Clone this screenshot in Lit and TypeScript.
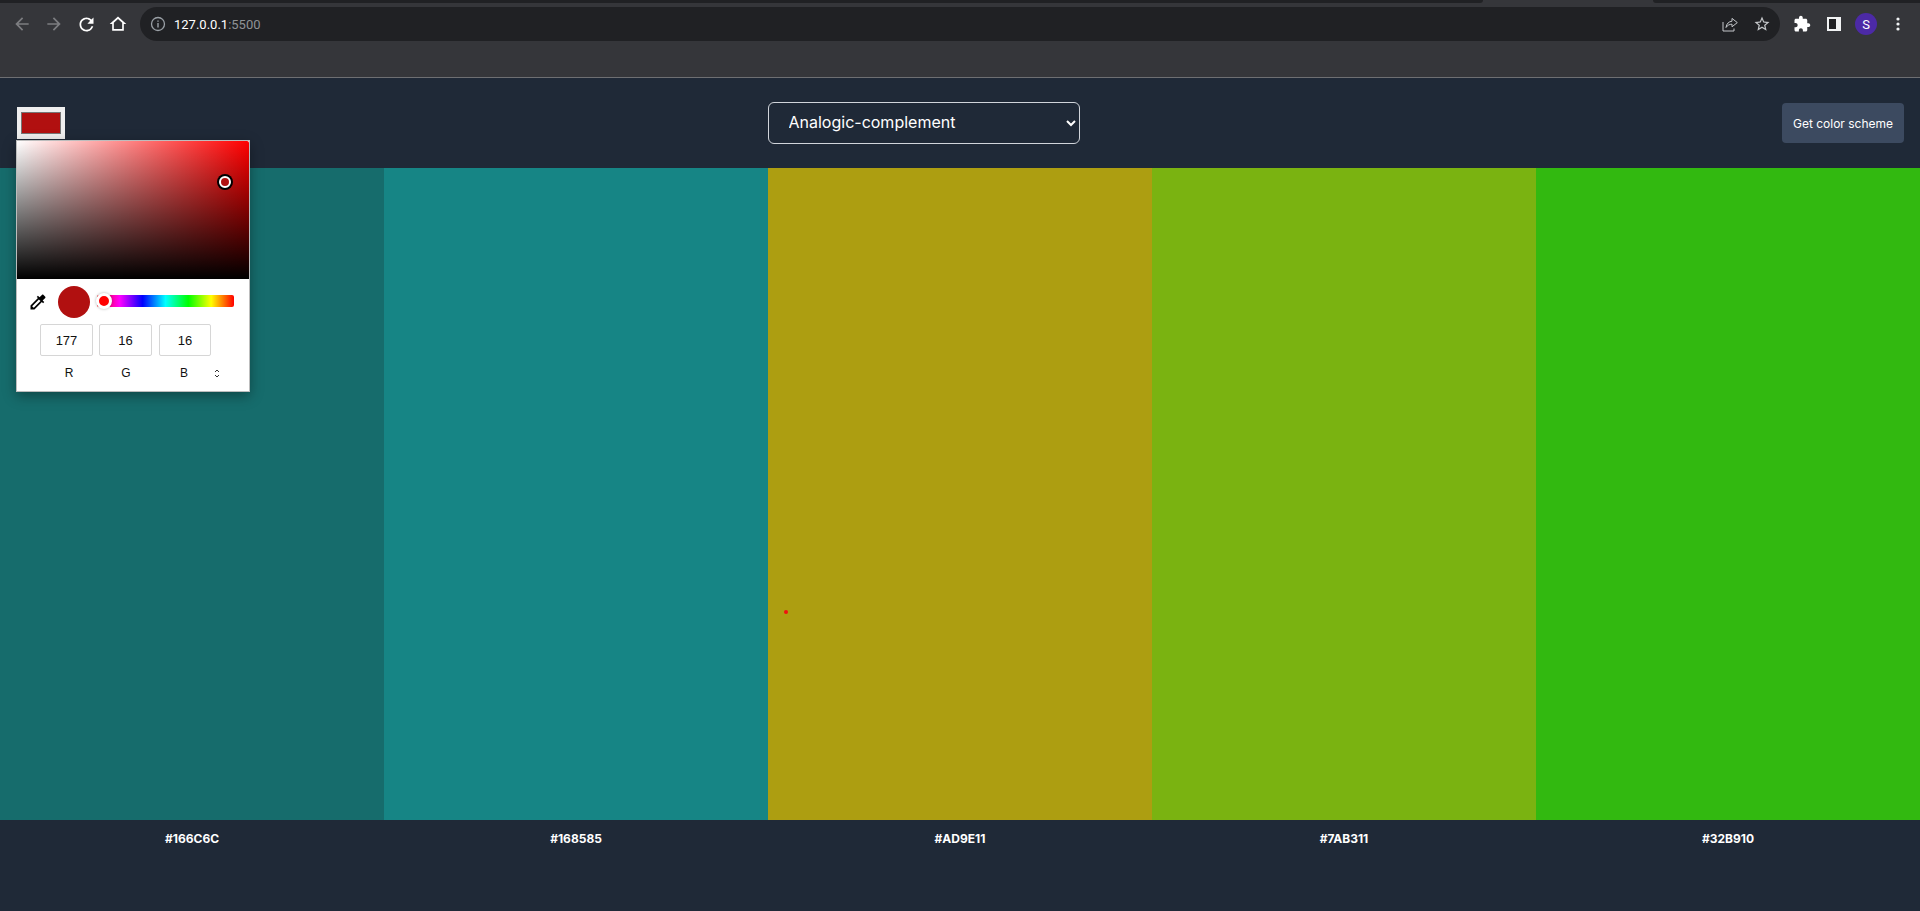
import { LitElement, css, html, svg } from 'lit';
import { customElement, state } from 'lit/decorators.js';

const SCHEME = ['#166C6C', '#168585', '#AD9E11', '#7AB311', '#32B910'];

const icon = (size: number, body: unknown, fill = 'currentColor') =>
  html`<svg width=${size} height=${size} viewBox="0 0 24 24" fill=${fill}>${body}</svg>`;

@customElement('browser-bar')
export class BrowserBar extends LitElement {
  static styles = css`
    :host {
      display: block;
      height: 78px;
      box-sizing: border-box;
      background: #35363a;
      border-bottom: 1px solid #6e6f72;
      font-family: 'Roboto', 'Liberation Sans', sans-serif;
    }
    .tabs {
      display: flex;
      height: 3px;
    }
    .tab-left {
      width: 1483px;
      background: #202124;
      border-bottom-right-radius: 3px;
    }
    .tab-gap {
      width: 170px;
    }
    .tab-right {
      flex: 1;
      background: #202124;
      border-bottom-left-radius: 3px;
    }
    .toolbar {
      display: flex;
      align-items: center;
      height: 34px;
      margin-top: 4px;
      padding: 0 6px;
    }
    .btn {
      width: 32px;
      height: 32px;
      flex: none;
      display: flex;
      align-items: center;
      justify-content: center;
      color: #fff;
    }
    .btn.off {
      color: #7c7d80;
    }
    .omnibox {
      flex: 1;
      height: 34px;
      margin: 0 6px;
      display: flex;
      align-items: center;
      background: #202124;
      border-radius: 17px;
      padding: 0 8px 0 10px;
      color: #c4c7ca;
    }
    .info {
      width: 16px;
      height: 16px;
      color: #9aa0a6;
      display: flex;
    }
    .url {
      margin-left: 8px;
      flex: 1;
      font-size: 13px;
      color: #fff;
    }
    .url span {
      color: #8f9296;
    }
    .share {
      display: flex;
      margin-right: 15px;
    }
    .star {
      display: flex;
      margin-right: 1px;
    }
    .avatar {
      width: 22px;
      height: 22px;
      border-radius: 50%;
      background: #4c2aa6;
      color: #fff;
      font-size: 13px;
      display: flex;
      align-items: center;
      justify-content: center;
    }
  `;

  render() {
    return html`
      <div class="tabs">
        <div class="tab-left"></div>
        <div class="tab-gap"></div>
        <div class="tab-right"></div>
      </div>
      <div class="toolbar">
        <div class="btn off">
          ${icon(20, svg`<path d="M20 11H7.83l5.59-5.59L12 4l-8 8 8 8 1.41-1.41L7.83 13H20v-2z" />`)}
        </div>
        <div class="btn off">
          ${icon(20, svg`<path d="M4 11h12.17l-5.59-5.59L12 4l8 8-8 8-1.41-1.41L16.17 13H4v-2z" />`)}
        </div>
        <div class="btn">
          ${icon(21, svg`<path d="M17.65 6.35A7.958 7.958 0 0 0 12 4c-4.42 0-7.99 3.58-7.99 8s3.57 8 7.99 8c3.73 0 6.84-2.55 7.73-6h-2.08A5.99 5.99 0 0 1 12 18c-3.31 0-6-2.69-6-6s2.69-6 6-6c1.66 0 3.14.69 4.22 1.78L13 11h7V4l-2.35 2.35z" />`)}
        </div>
        <div class="btn">
          ${icon(20, svg`<path fill-rule="evenodd" d="M12 3L2 12h3v8h14v-8h3L12 3zM12 6l5 4.5V18H7v-7.5z" />`)}
        </div>
        <div class="omnibox">
          <div class="info">
            <svg width="16" height="16" viewBox="0 0 16 16" fill="none" stroke="currentColor">
              <circle cx="8" cy="8" r="6.5" stroke-width="1.3" />
              <path d="M8 7v4.5M8 4.4v1.4" stroke-width="1.4" />
            </svg>
          </div>
          <div class="url">127.0.0.1<span>:5500</span></div>
          <div class="share">
            <svg width="16" height="16" viewBox="0 0 16 16" fill="none" stroke="currentColor">
              <path d="M1 6v9h11v-2.5" />
              <path d="M4 11.5C4.5 7.5 7 5.5 10 5.2V2.4l5.3 4.2-5.3 4.2V8.2c-2.4 0-4.6 1-6 3.3z" />
            </svg>
          </div>
          <div class="star">
            ${icon(18, svg`<path d="M22 9.24l-7.19-.62L12 2 9.19 8.63 2 9.24l5.46 4.73L5.82 21 12 17.27 18.18 21l-1.63-7.03L22 9.24zM12 15.4l-3.76 2.27 1-4.28-3.32-2.88 4.38-.38L12 6.1l1.71 4.04 4.38.38-3.32 2.88 1 4.28L12 15.4z" />`)}
          </div>
        </div>
        <div class="btn">
          ${icon(18, svg`<path d="M20.5 11H19V7c0-1.1-.9-2-2-2h-4V3.5C13 2.12 11.88 1 10.5 1S8 2.12 8 3.5V5H4c-1.1 0-1.99.9-1.99 2v3.8H3.5c1.49 0 2.7 1.21 2.7 2.7s-1.21 2.7-2.7 2.7H2V20c0 1.1.9 2 2 2h3.8v-1.5c0-1.49 1.21-2.7 2.7-2.7 1.49 0 2.7 1.21 2.7 2.7V22H17c1.1 0 2-.9 2-2v-4h1.5c1.38 0 2.5-1.12 2.5-2.5S21.88 11 20.5 11z" />`)}
        </div>
        <div class="btn">
          <svg width="14" height="14" viewBox="0 0 14 14">
            <path fill="#f1f3f4" fill-rule="evenodd" d="M0 0h14v14H0zM2 2v10h7V2z" />
            <rect x="2" y="2" width="7" height="10" fill="#202124" />
          </svg>
        </div>
        <div class="btn"><div class="avatar">S</div></div>
        <div class="btn">
          <svg width="4" height="14" viewBox="0 0 4 14" fill="#f1f3f4">
            <circle cx="2" cy="2" r="1.6" />
            <circle cx="2" cy="7" r="1.6" />
            <circle cx="2" cy="12" r="1.6" />
          </svg>
        </div>
      </div>
    `;
  }
}

@customElement('color-popup')
export class ColorPopup extends LitElement {
  static styles = css`
    :host {
      position: absolute;
      top: 140px;
      left: 16px;
      width: 234px;
      height: 252px;
      box-sizing: border-box;
      background: #fff;
      border: 1px solid #bdbdbd;
      box-shadow: 0 4px 12px rgba(0, 0, 0, 0.35);
      font-family: 'Liberation Sans', Arial, sans-serif;
      color: #111;
      display: block;
    }
    .field {
      position: relative;
      height: 138px;
      background: linear-gradient(to top, #000, transparent), linear-gradient(to right, #fff, #f00);
      border-top-right-radius: 2px;
    }
    .thumb {
      position: absolute;
      left: 202px;
      top: 35px;
      width: 12px;
      height: 12px;
      box-sizing: border-box;
      border-radius: 50%;
      background: #b11010;
      border: 2px solid #fff;
      box-shadow: 0 0 0 2px #000;
    }
    .controls {
      display: flex;
      align-items: center;
      height: 45px;
    }
    .dropper {
      width: 20px;
      height: 20px;
      margin-left: 11px;
      display: flex;
      color: #000;
    }
    .preview {
      width: 32px;
      height: 32px;
      margin-left: 10px;
      margin-top: 1px;
      border-radius: 50%;
      background: #b11010;
    }
    .hue {
      position: relative;
      width: 137px;
      height: 12px;
      margin-left: 7px;
      margin-top: -1px;
      border-radius: 2px;
      background: linear-gradient(to right, #f00, #f0f, #00f, #0ff, #0f0, #ff0, #f00);
    }
    .hue i {
      position: absolute;
      left: -1px;
      top: -2px;
      width: 16px;
      height: 16px;
      box-sizing: border-box;
      border-radius: 50%;
      background: #f00;
      border: 3px solid #fff;
      box-shadow: 0 0 3px rgba(0, 0, 0, 0.3);
    }
    .row {
      display: grid;
      grid-template-columns: 53px 53px 53px;
      column-gap: 6px;
      padding-left: 23px;
    }
    .val {
      height: 32px;
      box-sizing: border-box;
      border: 1px solid #d6d6d6;
      border-radius: 2px;
      font-size: 13px;
      display: flex;
      align-items: center;
      justify-content: center;
    }
    .val.last {
      margin-left: 1px;
    }
    .names {
      display: grid;
      grid-template-columns: 58px 56px 60px 6px;
      padding-left: 23px;
      margin-top: 9px;
      font-size: 12px;
      line-height: 16px;
      text-align: center;
    }
    .spin {
      display: flex;
      align-items: center;
      justify-content: center;
      color: #333;
    }
  `;

  render() {
    return html`
      <div class="field"><div class="thumb"></div></div>
      <div class="controls">
        <div class="dropper">
          ${icon(20, svg`<path d="M20.71 5.63l-2.34-2.34c-.39-.39-1.02-.39-1.41 0l-3.12 3.12-1.93-1.91-1.41 1.41 1.42 1.42L3 16.25V21h4.75l8.92-8.92 1.42 1.42 1.41-1.41-1.92-1.92 3.12-3.12c.4-.4.4-1.03.01-1.42zM6.92 19L5 17.08l8.06-8.06 1.92 1.92L6.92 19z" />`)}
        </div>
        <div class="preview"></div>
        <div class="hue"><i></i></div>
      </div>
      <div class="row">
        <div class="val">177</div>
        <div class="val">16</div>
        <div class="val last">16</div>
      </div>
      <div class="names">
        <div>R</div>
        <div>G</div>
        <div>B</div>
        <div class="spin">
          <svg width="6" height="9" viewBox="0 0 6 9" fill="none" stroke="currentColor">
            <path d="M1 3l2-2 2 2M1 6l2 2 2-2" />
          </svg>
        </div>
      </div>
    `;
  }
}

@customElement('app-root')
export class AppRoot extends LitElement {
  static styles = css`
    :host {
      display: flex;
      flex-direction: column;
      position: relative;
      height: 911px;
      overflow: hidden;
      background: #1f2937;
      color: #fff;
      font-family: 'Inter', 'Liberation Sans', sans-serif;
    }
    header {
      display: flex;
      align-items: center;
      justify-content: space-between;
      height: 90px;
      flex: none;
      padding: 0 16px 0 17px;
    }
    .swatch {
      width: 48px;
      height: 32px;
      box-sizing: border-box;
      padding: 5px 4px;
      background: #efefef;
    }
    .swatch div {
      height: 100%;
      box-sizing: border-box;
      background: #b11010;
      border: 1px solid #767676;
    }
    select {
      width: 312px;
      height: 42px;
      box-sizing: border-box;
      padding: 0 16px 2px;
      background: #1f2937;
      color: #fff;
      border: 1px solid #d1d5db;
      border-radius: 6px;
      font: 400 16px 'Inter', sans-serif;
    }
    button {
      width: 122px;
      height: 40px;
      border: 0;
      border-radius: 4px;
      background: #3c4a60;
      color: #fff;
      font: 400 12px 'Inter', sans-serif;
    }
    .cols {
      flex: 1;
      display: flex;
    }
    .cols div {
      flex: 1;
    }
    footer {
      display: flex;
      flex: none;
      height: 91px;
      padding-top: 11px;
      box-sizing: border-box;
    }
    footer div {
      flex: 1;
      text-align: center;
      font-size: 12px;
      font-weight: 700;
      line-height: 16px;
    }
    .speck {
      position: absolute;
      left: 784px;
      top: 610px;
      width: 4px;
      height: 4px;
      border-radius: 50%;
      background: #f01010;
    }
  `;

  @state() private colors = SCHEME;

  render() {
    return html`
      <browser-bar></browser-bar>
      <header>
        <div class="swatch"><div></div></div>
        <select>
          <option>Analogic-complement</option>
        </select>
        <button>Get color scheme</button>
      </header>
      <div class="cols">
        ${this.colors.map((c) => html`<div style="background: ${c}"></div>`)}
      </div>
      <footer>${this.colors.map((c) => html`<div>${c}</div>`)}</footer>
      <color-popup></color-popup>
      <div class="speck"></div>
    `;
  }
}
